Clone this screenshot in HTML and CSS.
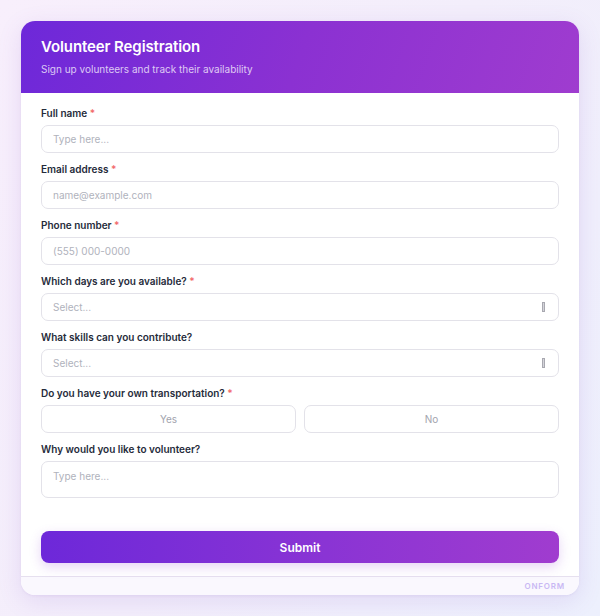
FILE: index.html
```html
<!DOCTYPE html>
<html>
<head>
<meta charset="utf-8">
<link rel="stylesheet" href="styles.css">
</head>
<body>
<div class="page">
  <div class="card">
    <div class="header">
      <div class="title">Volunteer Registration</div>
      <div class="subtitle">Sign up volunteers and track their availability</div>
    </div>
    <div class="body">
      <div class="field">
        <div class="label">Full name <span class="req">*</span></div>
        <div class="input">Type here...</div>
      </div>
      <div class="field">
        <div class="label">Email address <span class="req">*</span></div>
        <div class="input">name@example.com</div>
      </div>
      <div class="field">
        <div class="label">Phone number <span class="req">*</span></div>
        <div class="input">(555) 000-0000</div>
      </div>
      <div class="field">
        <div class="label">Which days are you available? <span class="req">*</span></div>
        <div class="input select"><span>Select...</span><span class="tofu"></span></div>
      </div>
      <div class="field">
        <div class="label">What skills can you contribute?</div>
        <div class="input select"><span>Select...</span><span class="tofu"></span></div>
      </div>
      <div class="field">
        <div class="label">Do you have your own transportation? <span class="req">*</span></div>
        <div class="choices">
          <div class="choice">Yes</div>
          <div class="choice">No</div>
        </div>
      </div>
      <div class="field">
        <div class="label">Why would you like to volunteer?</div>
        <div class="input textarea">Type here...</div>
      </div>
      <button class="submit">Submit</button>
    </div>
    <div class="footer">ONFORM</div>
  </div>
</div>
</body>
</html>
```
FILE: styles.css
```css
* { box-sizing: border-box; }
html, body { margin: 0; padding: 0; }
body {
  font-family: Inter, "Noto Sans", sans-serif;
  background: linear-gradient(120deg, #f8effc 0%, #f3eefb 50%, #edf0fd 100%);
  width: 600px;
  height: 616px;
  overflow: hidden;
}
.page {
  padding: 21px;
}
.card {
  background: #fff;
  border-radius: 14px;
  overflow: hidden;
  box-shadow: 0 6px 24px rgba(130, 80, 200, 0.14), 0 1px 3px rgba(120, 80, 180, 0.08);
}
.header {
  background: linear-gradient(110deg, #6d28d9 0%, #8b31d2 50%, #9f3ccf 100%);
  padding: 16px 20px 17px;
  color: #fff;
}
.title {
  font-size: 15px;
  font-weight: 600;
  line-height: 20px;
  letter-spacing: -0.1px;
}
.subtitle {
  margin-top: 5px;
  font-size: 10px;
  line-height: 14px;
  color: rgba(255, 255, 255, 0.75);
}
.body {
  padding: 13px 20px 13px;
  display: flex;
  flex-direction: column;
}
.field {
  display: flex;
  flex-direction: column;
  gap: 5px;
  margin-bottom: 9px;
}
.field:last-of-type { margin-bottom: 0; }
.label {
  font-size: 10px;
  line-height: 14px;
  font-weight: 600;
  color: #252b3a;
}
.req { color: #f26b6b; }
.input {
  height: 28px;
  border: 1.5px solid #e3e2e9;
  border-radius: 7px;
  padding: 0 11px;
  display: flex;
  align-items: center;
  font-size: 10px;
  color: #b0b2bc;
}
.select { justify-content: space-between; }
.tofu {
  width: 3px;
  height: 10px;
  border: 1px solid #a8a8b0;
  background: #d4d4da;
  margin-right: 2px;
}
.textarea {
  height: 37px;
  align-items: flex-start;
  padding-top: 8px;
}
.choices {
  display: flex;
  gap: 8px;
}
.choice {
  flex: 1;
  height: 28px;
  border: 1.5px solid #e3e2e9;
  border-radius: 7px;
  display: flex;
  align-items: center;
  justify-content: center;
  font-size: 10px;
  color: #a2a4ae;
}
.submit {
  margin-top: 33px;
  height: 32px;
  border: none;
  border-radius: 8px;
  background: linear-gradient(90deg, #6d28d9 0%, #8a34d4 55%, #a03ccf 100%);
  color: #fff;
  font-family: Inter, "Noto Sans", sans-serif;
  font-size: 12px;
  font-weight: 600;
  box-shadow: 0 4px 12px rgba(140, 60, 210, 0.22);
}
.footer {
  height: 19px;
  border-top: 1px solid #e6e0ef;
  background: #faf8fe;
  font-size: 8px;
  font-weight: 600;
  letter-spacing: 0.8px;
  color: #c9b8f4;
  text-align: right;
  padding-right: 14px;
  line-height: 18px;
}
```
